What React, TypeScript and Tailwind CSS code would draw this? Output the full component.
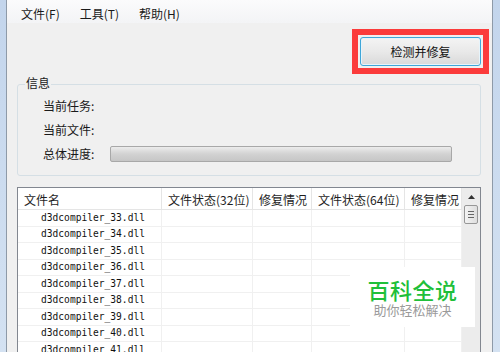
import { FC } from "react";

const cjk = "font-['Microsoft_YaHei','Noto_Sans_CJK_SC',sans-serif]";

const files = [33, 34, 35, 36, 37, 38, 39, 40, 41].map(
  (n) => `d3dcompiler_${n}.dll`,
);

// widths of the 5 list columns, in px
const cols = ["w-[144px]", "w-[91px]", "w-[59px]", "w-[93px]", "w-[57px]"];
const headers = ["文件名", "文件状态(32位)", "修复情况", "文件状态(64位)", "修复情况"];

const InfoRow: FC<{ label: string; bar?: boolean }> = ({ label, bar }) => (
  <div className="flex h-[24px] items-center">
    <span className="w-[67px] text-[12px] leading-[14px] text-[#1a1a1a]">
      {label}
    </span>
    {bar && (
      <div className="h-[16px] w-[342px] rounded-[2px] border border-[#a8a8a8] bg-gradient-to-b from-[#ececec] via-[#d2d2d2] to-[#c6c6c6]" />
    )}
  </div>
);

export default function App() {
  return (
    <div
      className={`relative flex h-[352px] w-[500px] overflow-hidden bg-[#f0f0f0] ${cjk}`}
    >
      {/* window frame, left */}
      <div className="w-[7px] shrink-0 border-r border-[#8e9aa8] bg-gradient-to-b from-[#c3d5ec] to-[#d4e2f2]" />

      <div className="flex w-[485px] shrink-0 flex-col">
        {/* menu bar */}
        <div className="flex h-[25px] items-center gap-[20px] bg-gradient-to-b from-[#fbfbfc] to-[#f3f4f6] pl-[14px] pt-[5px] text-[12px] text-[#1a1a1a]">
          <span>文件(F)</span>
          <span>工具(T)</span>
          <span>帮助(H)</span>
        </div>

        {/* action button with red highlight */}
        <div className="mt-[6px] flex justify-end pr-[3px]">
          <div className="border-[6px] border-[#fb3b3b] bg-[#f0f0f0] p-[2px]">
            <button className="flex h-[29px] w-[121px] items-center justify-center rounded-[3px] border border-[#3fa6d8] bg-gradient-to-b from-[#f4f4f4] via-[#e9e9e9] to-[#d9d9d9] text-[12px] text-[#111] shadow-[inset_0_0_0_1px_#e6f4fb]">
              检测并修复
            </button>
          </div>
        </div>

        {/* info group box */}
        <div className="relative ml-[10px] mt-[10px] w-[464px] rounded-[3px] border border-[#d5dfe5] pb-[9px] pl-[25px] pt-[9px]">
          <span className="absolute left-[7px] top-[-10px] bg-[#f0f0f0] px-[1px] text-[12px] leading-[16px] text-[#1a1a1a]">
            信息
          </span>
          <InfoRow label="当前任务:" />
          <InfoRow label="当前文件:" />
          <InfoRow label="总体进度:" bar />
        </div>

        {/* file list */}
        <div className="ml-[10px] mt-[11px] flex w-[464px] flex-1 border border-b-0 border-[#828790] bg-white">
          <div className="flex flex-col">
            <div className="flex h-[22px] border-b border-[#e5e5e5]">
              {headers.map((h, i) => (
                <div
                  key={i}
                  className={`${cols[i]} flex items-center border-r border-[#e5e5e5] pl-[6px] pt-[3px] text-[12px] text-[#1e1e1e]`}
                >
                  {h}
                </div>
              ))}
            </div>
            {files.map((f) => (
              <div key={f} className="flex h-[16.5px] border-b border-[#f0f0f0]">
                {cols.map((c, i) => (
                  <div
                    key={i}
                    className={`${c} flex items-center border-r border-[#f0f0f0] ${
                      i === 0 ? "pl-[23px]" : ""
                    }`}
                  >
                    {i === 0 && (
                      <span className="font-['DejaVu_Sans_Mono','Liberation_Mono',monospace] text-[9.6px] leading-[12px] text-[#111]">
                        {f}
                      </span>
                    )}
                  </div>
                ))}
              </div>
            ))}
          </div>

          {/* vertical scrollbar */}
          <div className="flex w-[18px] flex-col items-center bg-[#ececec]">
            <div className="flex h-[17px] w-full items-center justify-center">
              <svg width="7" height="4" viewBox="0 0 7 4">
                <path d="M3.5 0 L7 4 L0 4 Z" fill="#333" />
              </svg>
            </div>
            <div className="flex h-[19px] w-[14px] flex-col items-center justify-center gap-[2px] rounded-[2px] border border-[#979797] bg-gradient-to-r from-[#f3f3f3] to-[#dedede]">
              <div className="h-px w-[6px] bg-[#666]" />
              <div className="h-px w-[6px] bg-[#666]" />
              <div className="h-px w-[6px] bg-[#666]" />
            </div>
          </div>
        </div>
      </div>

      {/* window frame, right */}
      <div className="flex-1 border-l border-[#8e9aa8] bg-gradient-to-b from-[#c3d5ec] to-[#d4e2f2]" />

      {/* watermark */}
      <div className="absolute left-[350px] top-[267px] flex h-[60px] w-[125px] flex-col items-center justify-center gap-[1px] bg-white">
        <span className="text-[22px] font-medium leading-[24px] tracking-[0.5px] text-[#1fbf3a]">
          百科全说
        </span>
        <span className="text-[13px] leading-[16px] text-[#9a9a9a]">
          助你轻松解决
        </span>
      </div>
    </div>
  );
}
